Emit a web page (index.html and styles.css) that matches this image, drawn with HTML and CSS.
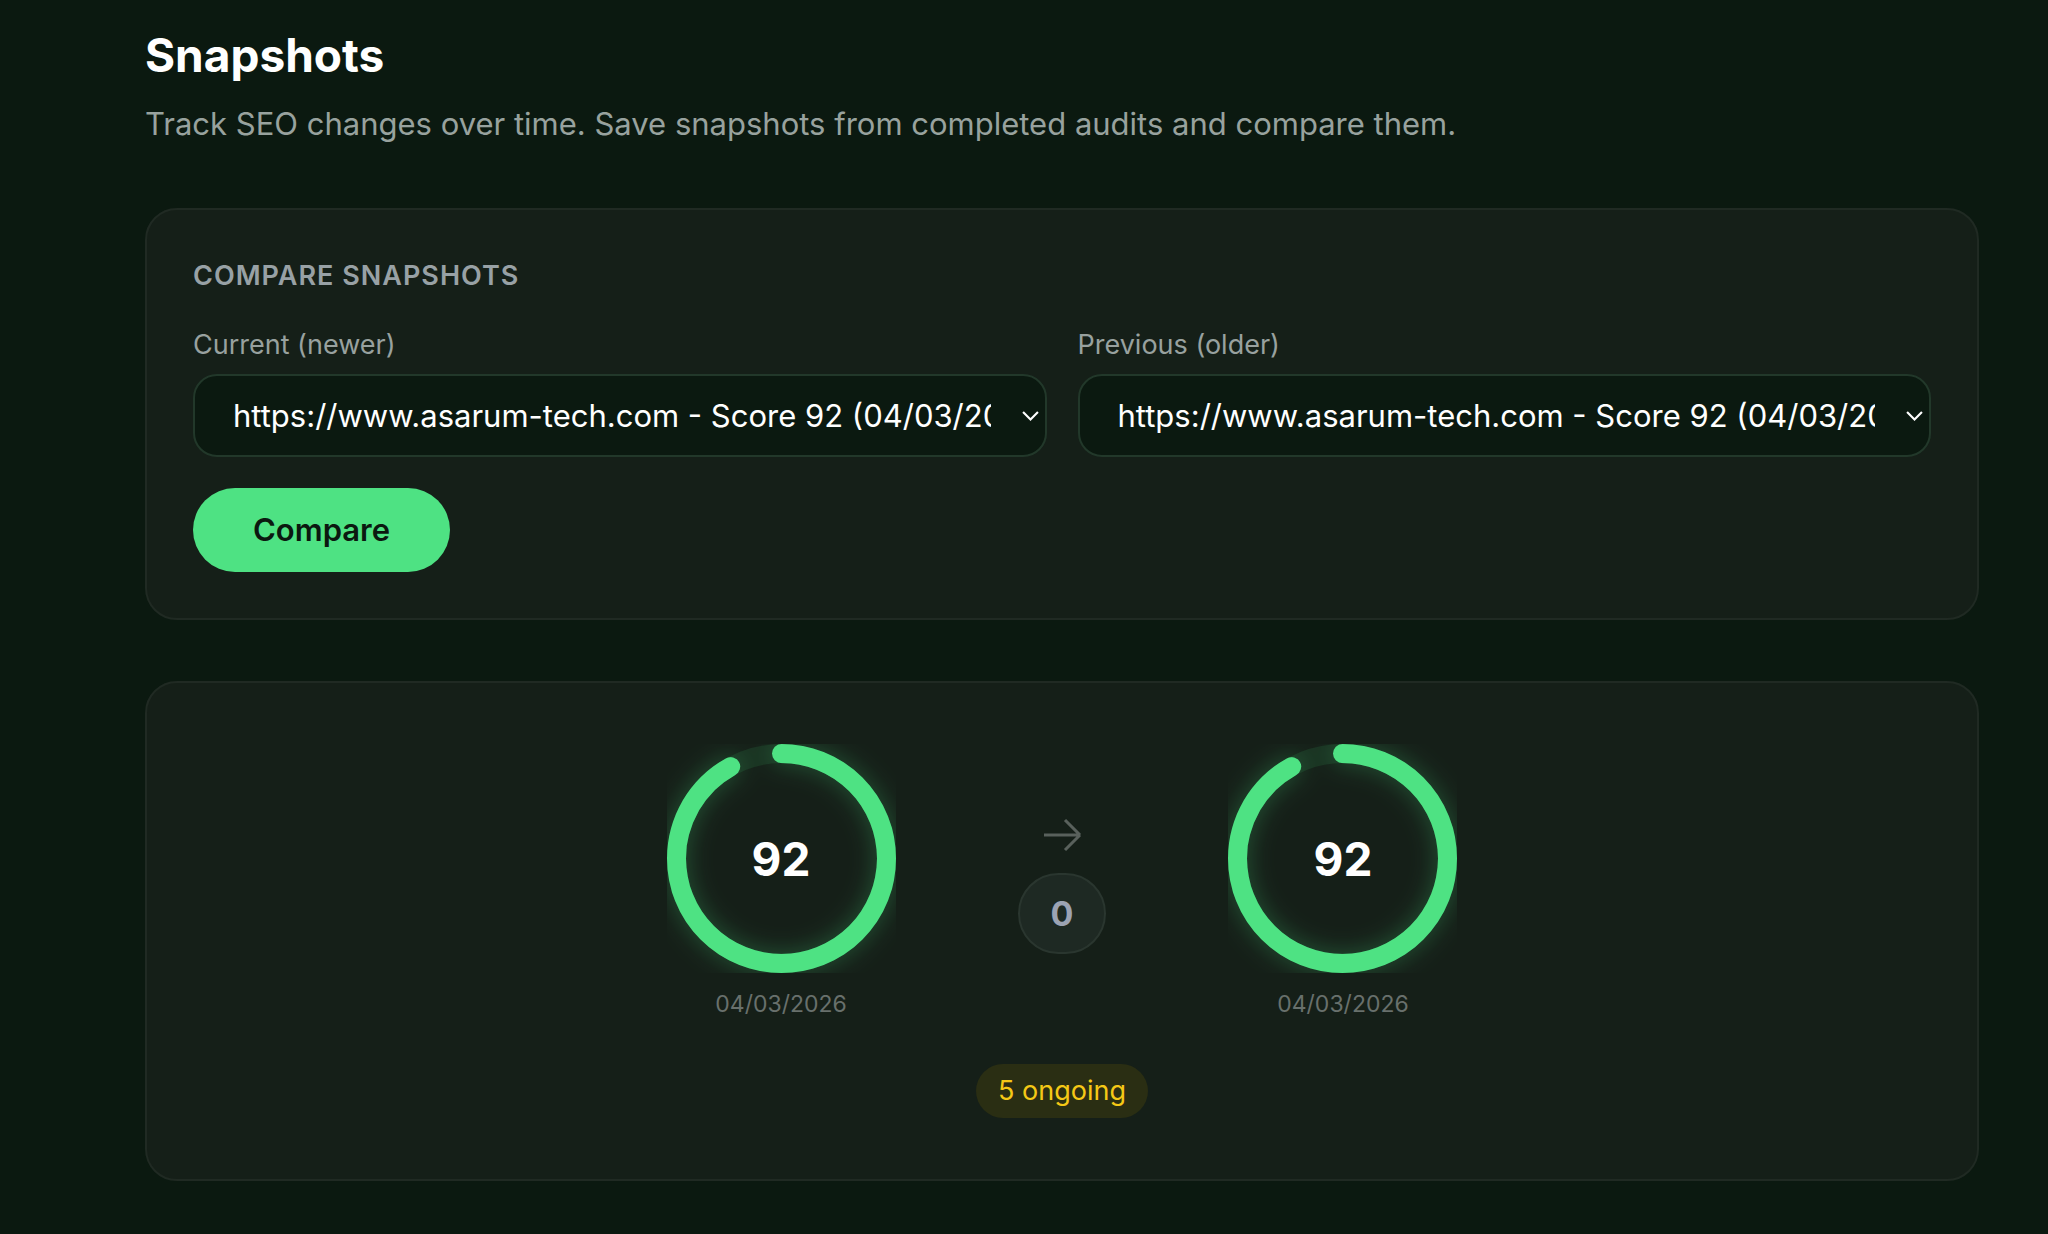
FILE: index.html
```
<!DOCTYPE html>
<html lang="en">
<head>
    <meta charset="UTF-8">
    <meta name="viewport" content="width=device-width, initial-scale=1.0">
    <title>Snapshots</title>
    <link rel="stylesheet" href="styles.css">
</head>
<body>
    <main class="page">
        <header class="page-header">
            <h1>Snapshots</h1>
            <p>Track SEO changes over time. Save snapshots from completed audits and compare them.</p>
        </header>

        <form class="card compare-form" id="compareForm">
            <h2>Compare snapshots</h2>
            <div class="fields">
                <div class="field">
                    <label for="current">Current (newer)</label>
                    <div class="select-wrap">
                        <select id="current">
                            <option>https://www.asarum-tech.com - Score 92 (04/03/2026)</option>
                        </select>
                        <svg class="chevron" viewBox="0 0 16 9" aria-hidden="true"><path d="M1 1l7 7 7-7"/></svg>
                    </div>
                </div>
                <div class="field">
                    <label for="previous">Previous (older)</label>
                    <div class="select-wrap">
                        <select id="previous">
                            <option>https://www.asarum-tech.com - Score 92 (04/03/2026)</option>
                        </select>
                        <svg class="chevron" viewBox="0 0 16 9" aria-hidden="true"><path d="M1 1l7 7 7-7"/></svg>
                    </div>
                </div>
            </div>
            <button type="submit">Compare</button>
        </form>

        <section class="card result">
            <div class="scores">
                <div class="score">
                    <div class="ring">
                        <svg viewBox="0 0 120 120" aria-hidden="true">
                            <circle class="ring-track" cx="60" cy="60" r="55"/>
                            <circle class="ring-value" cx="60" cy="60" r="55" pathLength="100" stroke-dasharray="92 100" transform="rotate(-90 60 60)"/>
                        </svg>
                        <span class="ring-number">92</span>
                    </div>
                    <time datetime="2026-03-04">04/03/2026</time>
                </div>
                <div class="delta">
                    <svg class="arrow" viewBox="0 0 24 24" aria-hidden="true"><path d="M13.5 4.5L21 12m0 0l-7.5 7.5M21 12H3"/></svg>
                    <span class="delta-value">0</span>
                </div>
                <div class="score">
                    <div class="ring">
                        <svg viewBox="0 0 120 120" aria-hidden="true">
                            <circle class="ring-track" cx="60" cy="60" r="55"/>
                            <circle class="ring-value" cx="60" cy="60" r="55" pathLength="100" stroke-dasharray="92 100" transform="rotate(-90 60 60)"/>
                        </svg>
                        <span class="ring-number">92</span>
                    </div>
                    <time datetime="2026-03-04">04/03/2026</time>
                </div>
            </div>
            <span class="badge">5 ongoing</span>
        </section>
    </main>

    <script>
        document.getElementById('compareForm').addEventListener('submit', function(event) {
            event.preventDefault();
        });
    </script>
</body>
</html>
```
FILE: styles.css
```
* {
    box-sizing: border-box;
}

body {
    margin: 0;
    background-color: #0b1910;
    color: #fff;
    font-family: Inter, "Liberation Sans", sans-serif;
    font-size: 31px;
    line-height: 44px;
}

h1, h2, p {
    margin: 0;
}

.page {
    padding: 24px 69px 48px 145px;
}

.page-header {
    margin-bottom: 62px;
}

h1 {
    margin-bottom: 16px;
    font-size: 46px;
    font-weight: 700;
    line-height: 62px;
}

.page-header p {
    color: #98a29e;
}

.card {
    border: 2px solid #202a23;
    border-radius: 32px;
    background-color: #151f18;
}

.compare-form {
    margin-bottom: 61px;
    padding: 46px;
}

h2 {
    margin-bottom: 30px;
    color: #98a1a5;
    font-size: 27px;
    font-weight: 600;
    line-height: 40px;
    letter-spacing: 1px;
    text-transform: uppercase;
}

.fields {
    display: grid;
    grid-template-columns: 1fr 1fr;
    gap: 31px;
    margin-bottom: 31px;
}

label {
    display: block;
    margin-bottom: 10px;
    color: #98a19f;
    font-size: 27px;
    line-height: 38px;
}

.select-wrap {
    position: relative;
}

select {
    display: block;
    width: 100%;
    height: 83px;
    padding: 0 54px 0 38px;
    border: 2px solid #22382a;
    border-radius: 24px;
    background-color: #0b1910;
    color: #fff;
    font: inherit;
    text-overflow: clip;
    appearance: none;
}

.chevron {
    position: absolute;
    top: 37px;
    right: 8px;
    width: 17px;
    fill: none;
    stroke: #fff;
    stroke-width: 2;
    pointer-events: none;
}

button {
    display: block;
    padding: 20px 60px;
    border: none;
    border-radius: 42px;
    background-color: #4ee283;
    color: #0b1910;
    font: inherit;
    font-weight: 600;
    cursor: pointer;
}

.result {
    display: flex;
    flex-direction: column;
    align-items: center;
    padding: 61px;
}

.scores {
    display: flex;
    justify-content: center;
    align-items: center;
    gap: 122px;
    margin-bottom: 44px;
}

.score {
    display: flex;
    flex-direction: column;
    align-items: center;
    gap: 16px;
}

.ring {
    display: grid;
    place-items: center;
    width: 229px;
    height: 229px;
}

.ring > * {
    grid-area: 1 / 1;
}

.ring svg {
    width: 100%;
    overflow: hidden;
}

.ring circle {
    fill: none;
    stroke-width: 10;
}

.ring-track {
    stroke: #1a3322;
}

.ring-value {
    stroke: #4ee283;
    stroke-linecap: round;
    filter: drop-shadow(0 0 6px rgba(74, 222, 128, 0.3));
}

.ring-number {
    font-size: 46px;
    font-weight: 700;
}

time {
    color: #68706c;
    font-size: 23px;
    line-height: 31px;
}

.delta {
    display: flex;
    flex-direction: column;
    align-items: center;
    gap: 14px;
}

.arrow {
    width: 48px;
    fill: none;
    stroke: #59615c;
    stroke-width: 1.5;
}

.delta-value {
    padding: 18px 31px;
    border: 2px solid #2a362f;
    border-radius: 44px;
    background-color: #1e2923;
    color: #9ca3b3;
    font-size: 34px;
    font-weight: 700;
    line-height: 41px;
}

.badge {
    padding: 8px 22px;
    border-radius: 27px;
    background-color: #2a2e13;
    color: #f5c816;
    font-size: 27px;
    line-height: 38px;
}
```
